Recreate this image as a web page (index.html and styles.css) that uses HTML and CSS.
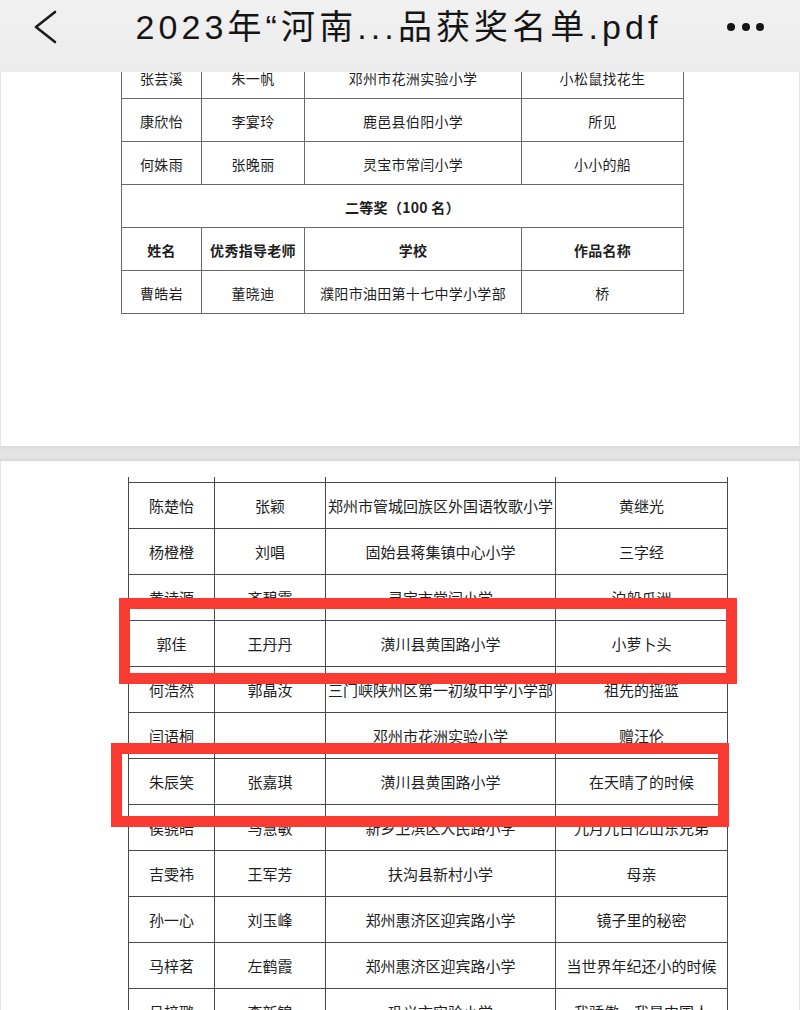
FILE: index.html
```html
<!DOCTYPE html>
<html lang="zh-CN">
<head>
<meta charset="utf-8">
<title>2023年“河南...品获奖名单.pdf</title>
<link rel="stylesheet" href="styles.css">
</head>
<body>
<header class="topbar">
  <div class="topbar-row">
    <svg class="back" width="26" height="34" viewBox="0 0 26 34" aria-hidden="true">
      <polyline points="22,2 3,17 22,32" fill="none" stroke="#1c1c1c" stroke-width="2.6" stroke-linecap="round" stroke-linejoin="round"/>
    </svg>
    <h1 class="title">2023年“河南...品获奖名单.pdf</h1>
    <div class="more"><span></span><span></span><span></span></div>
  </div>
</header>

<main class="viewer">
  <section class="page page-one">
    <table class="sheet sheet-one">
      <colgroup><col class="c1"><col class="c2"><col class="c3"><col class="c4"></colgroup>
      <tr><td>张芸溪</td><td>朱一帆</td><td>邓州市花洲实验小学</td><td>小松鼠找花生</td></tr>
      <tr><td>康欣怡</td><td>李宴玲</td><td>鹿邑县伯阳小学</td><td>所见</td></tr>
      <tr><td>何姝雨</td><td>张晚丽</td><td>灵宝市常闫小学</td><td>小小的船</td></tr>
      <tr class="bold"><td colspan="4">二等奖（100 名）</td></tr>
      <tr class="bold"><td>姓名</td><td>优秀指导老师</td><td>学校</td><td>作品名称</td></tr>
      <tr><td>曹皓岩</td><td>董晓迪</td><td>濮阳市油田第十七中学小学部</td><td>桥</td></tr>
    </table>
  </section>

  <div class="page-gap"></div>

  <section class="page page-two">
    <table class="sheet sheet-two">
      <colgroup><col class="d1"><col class="d2"><col class="d3"><col class="d4"></colgroup>
      <tr class="stub"><td></td><td></td><td></td><td></td></tr>
      <tr><td>陈楚怡</td><td>张颖</td><td>郑州市管城回族区外国语牧歌小学</td><td>黄继光</td></tr>
      <tr><td>杨橙橙</td><td>刘唱</td><td>固始县蒋集镇中心小学</td><td>三字经</td></tr>
      <tr><td>黄诗源</td><td>齐碧霞</td><td>灵宝市常闫小学</td><td>泊船瓜洲</td></tr>
      <tr><td>郭佳</td><td>王丹丹</td><td>潢川县黄国路小学</td><td>小萝卜头</td></tr>
      <tr><td>何浩然</td><td>郭晶汝</td><td>三门峡陕州区第一初级中学小学部</td><td>祖先的摇篮</td></tr>
      <tr><td>闫语桐</td><td></td><td>邓州市花洲实验小学</td><td>赠汪伦</td></tr>
      <tr><td>朱辰笑</td><td>张嘉琪</td><td>潢川县黄国路小学</td><td>在天晴了的时候</td></tr>
      <tr><td>侯骁皓</td><td>马慧敏</td><td>新乡卫滨区人民路小学</td><td>九月九日忆山东兄弟</td></tr>
      <tr><td>吉雯祎</td><td>王军芳</td><td>扶沟县新村小学</td><td>母亲</td></tr>
      <tr><td>孙一心</td><td>刘玉峰</td><td>郑州惠济区迎宾路小学</td><td>镜子里的秘密</td></tr>
      <tr><td>马梓茗</td><td>左鹤霞</td><td>郑州惠济区迎宾路小学</td><td>当世界年纪还小的时候</td></tr>
      <tr><td>吕梓璐</td><td>李新锦</td><td>巩义市实验小学</td><td>我骄傲，我是中国人</td></tr>
    </table>
    <div class="mark mark-one"></div>
    <div class="mark mark-two"></div>
  </section>
</main>
</body>
</html>
```

FILE: styles.css
```css
html, body {
  margin: 0;
  padding: 0;
  background: #ffffff;
}

body {
  width: 800px;
  height: 1010px;
  overflow: hidden;
  font-family: "Noto Sans CJK SC", "Noto Sans", sans-serif;
  color: #1e1e1e;
}

/* ---------- top bar ---------- */
.topbar {
  position: fixed;
  top: 0;
  left: 0;
  right: 0;
  height: 72px;
  background: linear-gradient(#f1f1f1, #ececec);
  z-index: 10;
}

.topbar-row {
  height: 53px;
  display: grid;
  grid-template-columns: 1fr auto 1fr;
  align-items: center;
  padding: 0 36px 0 33px;
}

.back {
  justify-self: start;
  display: block;
}

.title {
  margin: 0;
  font-family: "Liberation Sans", "Noto Sans CJK SC", sans-serif;
  font-weight: 400;
  font-size: 34px;
  letter-spacing: 4.1px;
  color: #151515;
  line-height: 1;
  white-space: nowrap;
}

.more {
  justify-self: end;
  display: flex;
  gap: 6.5px;
  padding-top: 1px;
}

.more span {
  width: 8px;
  height: 8px;
  border-radius: 50%;
  background: #161616;
}

/* ---------- pages ---------- */
.viewer {
  display: flex;
  flex-direction: column;
}

.page {
  position: relative;
  background: #ffffff;
  border-left: 1px solid #e6e6e6;
  border-right: 1px solid #e6e6e6;
}

.page-one {
  height: 446px;
  padding-top: 55px;
  box-sizing: border-box;
}

.page-gap {
  height: 15px;
  background: linear-gradient(#d9d9d9, #e4e4e4 25%, #e4e4e4 75%, #d6d6d6);
}

.page-two {
  height: 549px;
  padding-top: 16px;
  box-sizing: border-box;
}

/* ---------- tables ---------- */
.sheet {
  border-collapse: collapse;
  table-layout: fixed;
  text-align: center;
}

.sheet td {
  padding: 0;
  vertical-align: middle;
  white-space: nowrap;
  overflow: hidden;
}

.sheet-one {
  margin-left: 120px;
  width: 562px;
  font-size: 14px;
  letter-spacing: 0.3px;
}

.sheet-one td {
  border: 1px solid #6a6a6a;
  height: 40px;
  padding-top: 2px;
}

.sheet-one .bold td {
  font-weight: 700;
}

.c1 { width: 80px; }
.c2 { width: 103px; }
.c3 { width: 217px; }
.c4 { width: 162px; }

.sheet-two {
  margin-left: 127px;
  width: 599px;
  font-size: 15px;
  letter-spacing: 0;
}

.sheet-two td {
  border: 1px solid #4a4a4a;
  height: 45px;
}

.sheet-two .stub td {
  height: 5px;
  border-top: none;
}

.d1 { width: 86px; }
.d2 { width: 111px; }
.d3 { width: 230px; }
.d4 { width: 172px; }

/* ---------- red annotation boxes ---------- */
.mark {
  position: absolute;
  border: 11px solid #fa3b31;
  box-sizing: border-box;
}

.mark-one {
  left: 118px;
  top: 137px;
  width: 618px;
  height: 86px;
}

.mark-two {
  left: 110px;
  top: 282px;
  width: 618px;
  height: 84px;
}
```
